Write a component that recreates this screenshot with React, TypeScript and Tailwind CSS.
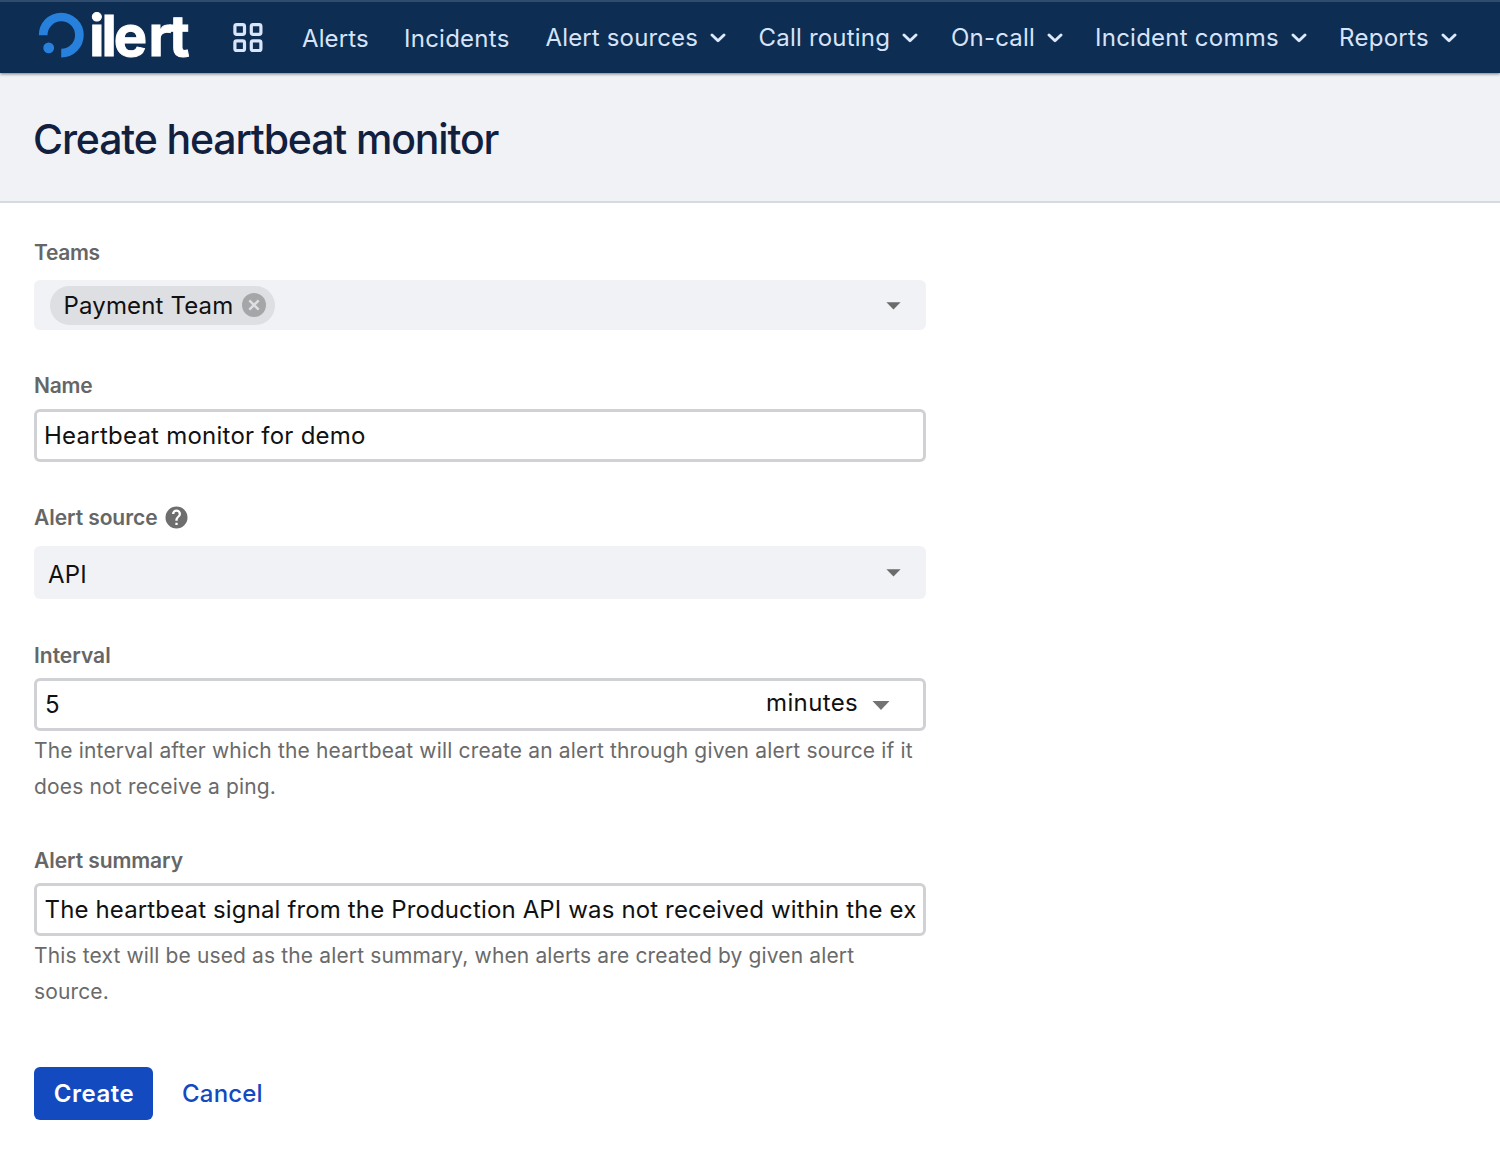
import type { ReactNode } from 'react'

function Logo() {
  return (
    <svg width="154" height="50" viewBox="38 12.500 154 50" className="block shrink-0 overflow-visible">
      <path d="M43.2 34.8A18.1 18.1 0 1 1 61.2 52.7" fill="none" stroke="#2680dc" strokeWidth="8.7" />
      <circle cx="48.7" cy="47.4" r="5.4" fill="#2680dc" />
      <text x="89.200 101.500 113.800 148.500 169" y="55.500" fill="#fff" stroke="#fff" strokeWidth="1" className="font-[Inter] text-[56px] font-bold">
        ilert
      </text>
    </svg>
  )
}

function AppsIcon() {
  return (
    <svg width="32" height="32" viewBox="0 0 32 32" fill="none" stroke="#d9e5fb" strokeWidth="3.2" className="block shrink-0">
      <rect x="2.9" y="2.7" width="9.6" height="9.6" rx="1.8" />
      <rect x="19.3" y="2.7" width="9.6" height="9.6" rx="1.8" />
      <rect x="2.9" y="18.9" width="9.6" height="9.6" rx="1.8" />
      <rect x="19.3" y="18.9" width="9.6" height="9.6" rx="1.8" />
    </svg>
  )
}

function Chevron() {
  return (
    <svg width="16" height="10" viewBox="0 0 16 10" className="block shrink-0" fill="none" stroke="#dce8fc" strokeWidth="2.9" strokeLinecap="round" strokeLinejoin="round">
      <path d="M2 2L8 7.8L14 2" />
    </svg>
  )
}

function Caret({ large = false }: { large?: boolean }) {
  return large ? (
    <svg width="18" height="9" viewBox="0 0 18 9" className="block" fill="#737373"><path d="M0.5 0h17L9 9z" /></svg>
  ) : (
    <svg width="15" height="8" viewBox="0 0 15 8" className="block" fill="#6b6b6b"><path d="M0.4 0.2h14.2L7.5 7.6z" /></svg>
  )
}

function NavItem({ label, className, menu = false }: { label: string; className: string; menu?: boolean }) {
  return (
    <a className={`flex shrink-0 items-center gap-3 text-[24px] leading-[30px] whitespace-nowrap text-[#d7e3f9] ${className}`}>
      <span>{label}</span>
      {menu && <Chevron />}
    </a>
  )
}

function Label({ children, className = 'tracking-[-0.07px]' }: { children: ReactNode; className?: string }) {
  return <div className={`flex h-6 items-center text-[21px] leading-6 font-semibold text-[#666666] ${className}`}>{children}</div>
}

function TextBox({ children }: { children: ReactNode }) {
  return (
    <div className="flex h-[53px] items-center overflow-hidden rounded-[6px] border-3 border-[#d0d1d5] px-[6px] text-[24px] leading-[30px] whitespace-nowrap text-[#111]">
      {children}
    </div>
  )
}

export default function App() {
  return (
    <div className="h-[1152px] w-[1500px] overflow-hidden bg-white font-[Inter,sans-serif]">
      <nav className="relative flex h-[73px] items-center border-t-2 border-[#2f4b6e] bg-[#0d2d52] pl-[38px] shadow-[0_1px_3px_rgba(0,0,0,0.5)]">
        <Logo />
        <div className="ml-10 w-[70px]"><AppsIcon /></div>
        <NavItem label="Alerts" className="w-[102px] pt-[3px] tracking-[0.1px]" />
        <NavItem label="Incidents" className="w-[141.5px] pt-[3px] tracking-[0.25px]" />
        <NavItem label="Alert sources" className="w-[213px] tracking-[0.15px]" menu />
        <NavItem label="Call routing" className="w-[192.5px] tracking-[0.2px]" menu />
        <NavItem label="On-call" className="w-[144px] tracking-[0.2px]" menu />
        <NavItem label="Incident comms" className="w-[244px] tracking-[0.25px]" menu />
        <NavItem label="Reports" className="tracking-[0.3px]" menu />
      </nav>

      <header className="flex h-[130px] items-center border-b-2 border-[#d5dae2] bg-[#f1f2f6] pt-[3px] pl-[33px]">
        <h1 className="text-[41px] leading-[48px] font-medium tracking-[-1.15px] text-[#12203f]">Create heartbeat monitor</h1>
      </header>

      <main className="ml-[34px] w-[892px] pt-[38px]">
        <Label className="tracking-[-0.3px]">Teams</Label>
        <div className="mt-[15px] flex h-[50px] items-center justify-between rounded-[6px] bg-[#f1f2f6] pr-[25px] pl-4">
          <div className="flex h-[39px] items-center gap-[9px] rounded-full bg-[#dedfe2] pr-[9px] pl-[13.5px]">
            <span className="pt-[2px] text-[24px] leading-[30px] tracking-[0.15px] text-[#111]">Payment Team</span>
            <svg width="24" height="24" viewBox="0 0 24 24" className="block">
              <circle cx="12" cy="12" r="12" fill="#a5a6a8" />
              <path d="M7.3 7.3l9.4 9.4M16.7 7.3l-9.4 9.4" stroke="#dedfe2" strokeWidth="2.4" />
            </svg>
          </div>
          <div className="pt-[2px]"><Caret /></div>
        </div>

        <Label className="mt-[44px] tracking-[-0.2px]">Name</Label>
        <div className="mt-[10.5px]">
          <TextBox><span className="pt-px pl-px tracking-[0.24px]">Heartbeat monitor for demo</span></TextBox>
        </div>

        <Label className="mt-[44.5px] gap-[7.5px] tracking-[-0.07px]">
          <span>Alert source</span>
          <svg width="23" height="23" viewBox="0 0 24 24" fill="#6e6e6e" className="mb-px block">
            <path d="M12 0.5a11.5 11.5 0 1 0 0 23a11.5 11.5 0 1 0 0-23zm1.2 19.4h-2.4v-2.4h2.4zm2.4-8.9-1.1 1.1c-.9.9-1.3 1.6-1.3 3.3h-2.4v-.6c0-1.3.5-2.4 1.4-3.3l1.4-1.5c.5-.4.7-1 .7-1.6a2.3 2.3 0 0 0-4.6 0H7.300a4.700 4.700 0 0 1 9.400 0c0 1-.4 1.900-1.100 2.600z" />
          </svg>
        </Label>
        <div className="mt-4 flex h-[53px] items-center justify-between rounded-[6px] bg-[#f1f2f6] pr-[25px] pl-[14px]">
          <span className="pt-1 text-[24px] leading-[30px] tracking-[0.2px] text-[#111]">API</span>
          <div className="pt-px"><Caret /></div>
        </div>

        <Label className="mt-[45px] tracking-[0px]">Interval</Label>
        <div className="mt-[10px]">
          <TextBox>
            <span className="flex-1 pl-[2px]">5</span>
            <span className="pb-[3px] tracking-[0.35px]">minutes</span>
            <span className="mr-[27px] ml-[14px] pt-px"><Caret large /></span>
          </TextBox>
        </div>
        <p className="mt-[2px] text-[21px] leading-9 tracking-[0.165px] whitespace-nowrap text-[#6a6a6a]">
          The interval after which the heartbeat will create an alert through given alert source if it<br />does not receive a ping.
        </p>

        <Label className="mt-[44px] tracking-[-0.07px]">Alert summary</Label>
        <div className="mt-[10px]">
          <TextBox>
            <span className="overflow-hidden pl-[1.5px] tracking-[0.14px]">The heartbeat signal from the Production API was not received within the ex</span>
          </TextBox>
        </div>
        <p className="mt-[2px] text-[21px] leading-9 tracking-[0.135px] whitespace-nowrap text-[#6a6a6a]">
          This text will be used as the alert summary, when alerts are created by given alert<br />source.
        </p>

        <div className="mt-[57px] flex items-center gap-[29px]">
          <button className="h-[53px] w-[119px] rounded-[6px] bg-[#134abf] pl-px text-[24px] leading-[30px] font-semibold tracking-[0.5px] text-white">Create</button>
          <button className="text-[24px] leading-[30px] font-medium tracking-[0.2px] text-[#134abf]">Cancel</button>
        </div>
      </main>
    </div>
  )
}
